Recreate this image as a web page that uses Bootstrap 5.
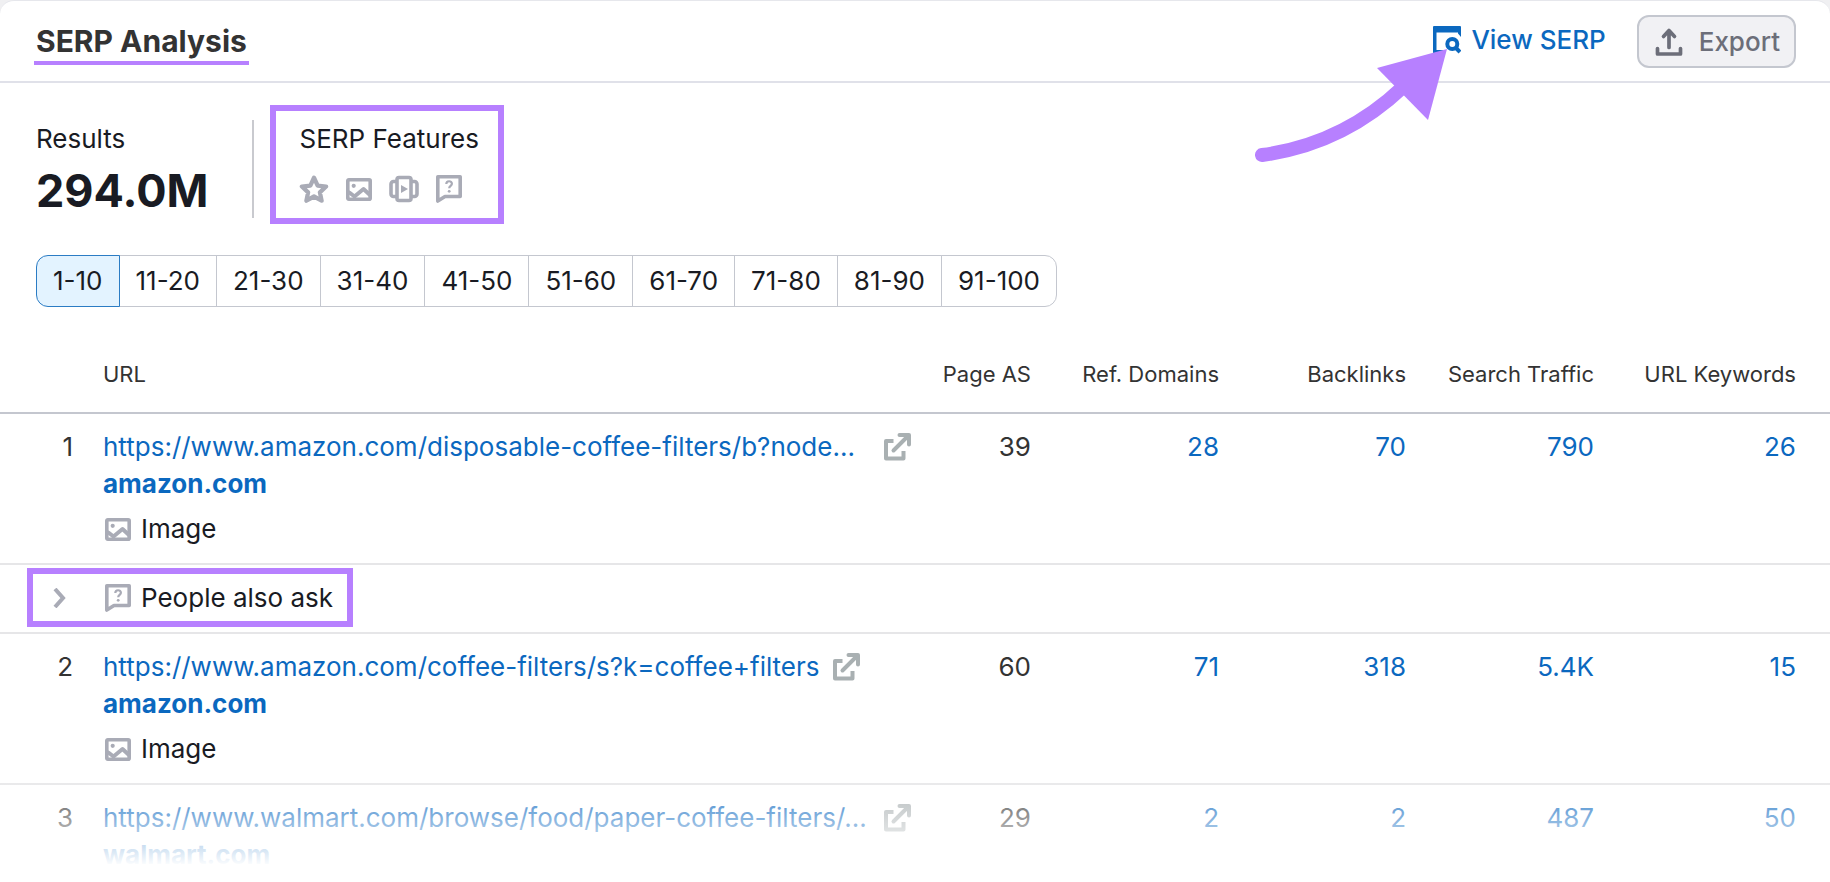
<!DOCTYPE html>
<html lang="en">
<head>
<meta charset="utf-8">
<meta name="viewport" content="width=device-width, initial-scale=1">
<title>SERP Analysis</title>
<link href="https://cdn.jsdelivr.net/npm/bootstrap@5.3.0/dist/css/bootstrap.min.css" rel="stylesheet">
<style>
  :root { --accent: #b780ff; --link: #0b68bf; --ink: #191b23; --icon: #a9abb6; --line: #c4c7cf; --gutter: 36px; }
  body { font-family: Inter, "Liberation Sans", sans-serif; font-size: 26px; line-height: 36px; color: var(--ink); background: #f0f0f2; }
  a { color: var(--link); text-decoration: none; }
  a:hover { color: #044792; }
  svg { flex: none; display: block; }
  .panel { background: #fff; border-top: 1px solid #e6e7ec; border-radius: 14px 14px 0 0; overflow: hidden; }
  .panel-head { padding: 14px 34px 13px; border-bottom: 2px solid #e0e1e9; }
  .panel-title { font-size: 30px; line-height: 40px; font-weight: 700; color: #333; margin: 0; padding: 3px 2px 0; border-bottom: 4px solid var(--accent); }
  .view-link { font-weight: 500; gap: 10px; margin: 0 31px 3px 0; }
  .export-btn { --bs-btn-color: #6c6e79; --bs-btn-bg: #f1f1f4; --bs-btn-border-color: var(--line); --bs-btn-border-width: 2px; --bs-btn-border-radius: 12px; --bs-btn-padding-x: 14px; --bs-btn-padding-y: 6px; --bs-btn-font-size: 26px; --bs-btn-font-weight: 500; --bs-btn-hover-color: #6c6e79; --bs-btn-hover-bg: #e6e7ec; --bs-btn-hover-border-color: var(--line); line-height: 37px; gap: 14px; }
  .arrow { right: 375px; top: 40px; color: var(--accent); pointer-events: none; }
  .summary { padding: 22px var(--gutter) 0; gap: 16px; }
  .results { padding: 1px 44px 0 0; margin: 15px 0 6px; border-right: 2px solid #c9cacf; }
  .total { font-size: 45px; line-height: 54px; font-weight: 700; margin-top: 7px; }
  .features { border: 6px solid var(--accent); padding: 10px 19px 14px 23px; color: var(--ink); }
  .features ul { gap: 17px; color: var(--icon); margin-top: 17px; }
  .pages { padding: 31px var(--gutter) 0; }
  .pages .btn { --bs-btn-color: var(--ink); --bs-btn-bg: #fff; --bs-btn-border-color: var(--line); --bs-btn-padding-x: 16px; --bs-btn-padding-y: 6px; --bs-btn-font-size: 26px; --bs-btn-line-height: 38px; --bs-btn-border-radius: 12px; --bs-btn-hover-color: var(--ink); --bs-btn-hover-bg: #f4f5f9; --bs-btn-hover-border-color: var(--line); --bs-btn-active-color: var(--ink); --bs-btn-active-bg: #e3f3ff; --bs-btn-active-border-color: #2b7cc4; flex: none; }
  .serp { table-layout: fixed; margin: 37px 0 0; color: #333; }
  .serp th, .serp td { padding: 0; border: 0; text-align: right; vertical-align: top; font-weight: 400; }
  .serp thead th { font-size: 22px; line-height: 32px; padding: 14px 0 22px; color: #333; }
  .serp thead { border-bottom: 2px solid var(--line); }
  .serp tbody tr { border-bottom: 2px solid #e6e6e8; }
  .serp tbody tr:last-child { border: 0; }
  .serp tbody td { padding-top: 15px; }
  .serp .rank { padding-right: 30px; }
  .serp .addr { text-align: left; padding-bottom: 16px; }
  .serp tbody tr:last-child .addr { padding-bottom: 9px; }
  .serp tr > :last-child:not(.addr) { padding-right: 34px; }
  .line-url { gap: 13px; margin-bottom: 1px; }
  .site { font-weight: 700; display: inline-block; }
  .tag { gap: 10px; margin-top: 9px; color: var(--ink); padding-left: 2px; }
  .tag svg { color: var(--icon); }
  .ext { color: #a9b0b2; }
  .serp tr.ask td { padding: 3px 0 5px 27px; text-align: left; }
  .ask-btn { border: 6px solid var(--accent); background: none; padding: 0 14px 0 15px; color: var(--ink); line-height: 47px; }
  .ask-btn .chev { margin-right: 37px; }
  .ask-btn svg { color: var(--icon); }
  .ask-btn .lbl { margin-left: 10px; }
  .fade-out { left: 0; right: 0; bottom: 0; height: 112px; background: linear-gradient(rgba(255,255,255,0), #fff 86%); pointer-events: none; }
</style>
</head>
<body>
<svg width="0" height="0" class="position-absolute" aria-hidden="true">
  <symbol id="i-image" viewBox="0 0 26 23"><rect x="1.800" y="1.800" width="22.400" height="19.400" rx="1" fill="none" stroke="currentColor" stroke-width="3.600"/><circle cx="7.700" cy="7.800" r="2.100" fill="currentColor"/><path d="M2 14l2 1 4.500 3.500L17.500 11l7 6.500" fill="none" stroke="currentColor" stroke-width="4" stroke-linejoin="round"/></symbol>
  <symbol id="i-ask" viewBox="0 0 26 28"><path d="M1.800 1.800h22.400v19.700H9L1.800 26z" fill="none" stroke="currentColor" stroke-width="3.600" stroke-linejoin="round"/><path d="M10.300 9c0-3.600 5.600-3.600 5.600-.3 0 2.100-2.700 2.200-2.700 4.600" fill="none" stroke="currentColor" stroke-width="2.200"/><circle cx="13.200" cy="16.300" r="1.400" fill="currentColor"/></symbol>
  <symbol id="i-ext" viewBox="0 0 27 28"><path d="M9.500 8H2v17.500h17.500V18" fill="none" stroke="currentColor" stroke-width="4" stroke-linejoin="round"/><path d="M9.500 17.500L23.500 3.500M15.500 2h9.500v9.500" fill="none" stroke="currentColor" stroke-width="4" stroke-linecap="round" stroke-linejoin="round"/></symbol>
</svg>

<main class="panel position-relative min-vh-100">
  <header class="panel-head d-flex justify-content-between align-items-center">
    <h1 class="panel-title">SERP Analysis</h1>
    <div class="d-flex align-items-center">
      <a class="view-link d-flex align-items-center" href="#">
        <svg width="28" height="28" viewBox="0 0 28 28" fill="none" stroke="currentColor"><path d="M28 1v10l-3-3.500V6.500H3.500V24H10v3.500H1a1 1 0 0 1-1-1V1a1 1 0 0 1 1-1h26a1 1 0 0 1 1 1z" fill="currentColor" stroke="none"/><circle cx="19.300" cy="18" r="5" stroke-width="4"/><path d="M23 22l4 4" stroke-width="4"/></svg>
        View SERP</a>
      <button type="button" class="btn export-btn d-flex align-items-center">
        <svg width="32" height="30" viewBox="0 0 32 30" fill="none" stroke="currentColor" stroke-width="3.700" stroke-linecap="round" stroke-linejoin="round"><path d="M4.500 21.500v5.500h23v-5.500M16 20.500V4M10.500 9.500L16 3.500l5.500 6"/></svg>
        Export</button>
    </div>
  </header>
  <svg class="arrow position-absolute" width="200" height="126" viewBox="0 0 200 126" aria-hidden="true"><path d="M7 114C60 107 108 84 148 46" fill="none" stroke="currentColor" stroke-width="14" stroke-linecap="round"/><path d="M192 8L122 27 173 79z" fill="currentColor"/></svg>

  <section class="summary d-flex">
    <div class="results">
      <div>Results</div>
      <div class="total">294.0M</div>
    </div>
    <div class="features">
      <div>SERP Features</div>
      <ul class="list-unstyled d-flex align-items-center mb-0">
        <li><svg width="30" height="30" viewBox="1 1 28 28" role="img" aria-label="Reviews"><path d="M15 4.500l3.400 7.300 7.900.9-5.800 5.400 1.600 7.800L15 22l-7.100 3.900 1.600-7.800-5.800-5.400 7.900-.9z" fill="none" stroke="currentColor" stroke-width="4" stroke-linejoin="round"/></svg></li>
        <li><svg width="26" height="23" role="img" aria-label="Image"><use href="#i-image"/></svg></li>
        <li><svg width="30" height="28" viewBox="0 0 30 28" role="img" aria-label="Video carousel" fill="none" stroke="currentColor" stroke-width="3.600"><rect x="8" y="2.500" width="14" height="23" rx="2"/><path d="M8 6.500H4.500a2.500 2.500 0 0 0-2.500 2.500v10a2.500 2.500 0 0 0 2.500 2.500H8M22 6.500h3.500a2.500 2.500 0 0 1 2.500 2.500v10a2.500 2.500 0 0 1-2.500 2.500H22"/><path d="M12 10l7 4-7 4z" fill="currentColor" stroke="none"/></svg></li>
        <li><svg width="26" height="28" role="img" aria-label="People also ask"><use href="#i-ask"/></svg></li>
      </ul>
    </div>
  </section>

  <nav class="pages" aria-label="Positions">
    <div class="btn-group">
      <button type="button" class="btn active">1-10</button>
      <button type="button" class="btn">11-20</button>
      <button type="button" class="btn">21-30</button>
      <button type="button" class="btn">31-40</button>
      <button type="button" class="btn">41-50</button>
      <button type="button" class="btn">51-60</button>
      <button type="button" class="btn">61-70</button>
      <button type="button" class="btn">71-80</button>
      <button type="button" class="btn">81-90</button>
      <button type="button" class="btn">91-100</button>
    </div>
  </nav>

  <table class="serp w-100">
    <colgroup><col style="width:103px"><col><col style="width:120px"><col style="width:188px"><col style="width:187px"><col style="width:188px"><col style="width:236px"></colgroup>
    <thead>
      <tr><th></th><th class="text-start">URL</th><th>Page AS</th><th>Ref. Domains</th><th>Backlinks</th><th>Search Traffic</th><th>URL Keywords</th></tr>
    </thead>
    <tbody>
      <tr>
        <td class="rank">1</td>
        <td class="addr">
          <div class="line-url d-flex align-items-center"><a class="flex-grow-1 text-nowrap" href="#">https://www.amazon.com/disposable-coffee-filters/b?node...</a><a class="ext" href="#" aria-label="Open page"><svg width="27" height="28"><use href="#i-ext"/></svg></a></div>
          <a class="site" href="#">amazon.com</a>
          <div class="tag d-flex align-items-center"><svg width="26" height="23"><use href="#i-image"/></svg>Image</div>
        </td>
        <td>39</td><td><a href="#">28</a></td><td><a href="#">70</a></td><td><a href="#">790</a></td><td><a href="#">26</a></td>
      </tr>
      <tr class="ask">
        <td colspan="7" class="addr"><button type="button" class="ask-btn d-inline-flex align-items-center"><svg class="chev" width="20" height="20" viewBox="0 0 20 20" fill="none" stroke="currentColor" stroke-width="4"><path d="M7 1l8 9-8 9"/></svg><svg width="26" height="28"><use href="#i-ask"/></svg><span class="lbl">People also ask</span></button></td>
      </tr>
      <tr>
        <td class="rank">2</td>
        <td class="addr">
          <div class="line-url d-flex align-items-center"><a class="text-nowrap" href="#">https://www.amazon.com/coffee-filters/s?k=coffee+filters</a><a class="ext" href="#" aria-label="Open page"><svg width="27" height="28"><use href="#i-ext"/></svg></a></div>
          <a class="site" href="#">amazon.com</a>
          <div class="tag d-flex align-items-center"><svg width="26" height="23"><use href="#i-image"/></svg>Image</div>
        </td>
        <td>60</td><td><a href="#">71</a></td><td><a href="#">318</a></td><td><a href="#">5.4K</a></td><td><a href="#">15</a></td>
      </tr>
      <tr>
        <td class="rank">3</td>
        <td class="addr">
          <div class="line-url d-flex align-items-center"><a class="flex-grow-1 text-nowrap" href="#">https://www.walmart.com/browse/food/paper-coffee-filters/...</a><a class="ext" href="#" aria-label="Open page"><svg width="27" height="28"><use href="#i-ext"/></svg></a></div>
          <a class="site" href="#">walmart.com</a>
        </td>
        <td>29</td><td><a href="#">2</a></td><td><a href="#">2</a></td><td><a href="#">487</a></td><td><a href="#">50</a></td>
      </tr>
    </tbody>
  </table>
  <div class="fade-out position-absolute"></div>
</main>
<script src="https://cdn.jsdelivr.net/npm/bootstrap@5.3.0/dist/js/bootstrap.bundle.min.js"></script>
</body>
</html>
